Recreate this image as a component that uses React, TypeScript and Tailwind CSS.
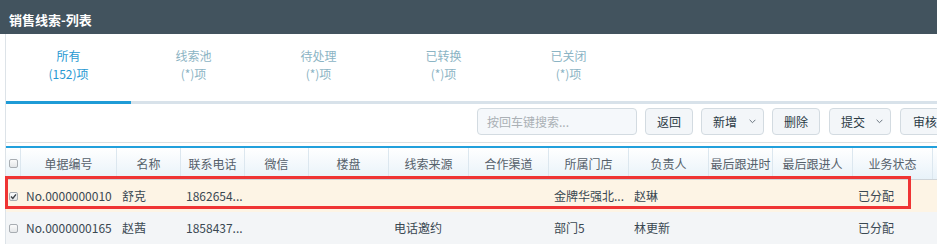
import React from "react";

const cols = [15, 96, 64, 64, 64, 80, 80, 80, 80, 80, 64, 80, 80, 80];
const headers = ["", "单据编号", "名称", "联系电话", "微信", "楼盘", "线索来源", "合作渠道", "所属门店", "负责人", "最后跟进时", "最后跟进人", "业务状态", ""];

const rows: { checked: boolean; bg: string; cells: string[] }[] = [
  {
    checked: true,
    bg: "bg-[#fdf4e5]",
    cells: ["No.0000000010", "舒克", "1862654...", "", "", "", "", "金牌华强北...", "赵琳", "", "", "已分配", ""],
  },
  {
    checked: false,
    bg: "bg-[#f3f5f7]",
    cells: ["No.0000000165", "赵茜", "1858437...", "", "", "电话邀约", "", "部门5", "林更新", "", "", "已分配", ""],
  },
];

function Checkbox({ checked }: { checked?: boolean }) {
  return (
    <div className="w-[9px] h-[9px] rounded-[2px] border border-[#a8adb2] bg-linear-to-b from-[#fbfbfb] to-[#e4e6e8] flex items-center justify-center">
      {checked && (
        <svg width="7" height="7" viewBox="0 0 7 7">
          <path d="M1 3.6 L2.8 5.4 L6 1.4" fill="none" stroke="#3d4247" strokeWidth="1.4" />
        </svg>
      )}
    </div>
  );
}

function Chevron() {
  return (
    <svg width="7" height="5" viewBox="0 0 7 5" className="shrink-0">
      <path d="M0.6 0.8 L3.5 3.7 L6.4 0.8" fill="none" stroke="#6b7680" strokeWidth="1" />
    </svg>
  );
}

const tabs = [
  { label: "所有", count: "(152)项", active: true },
  { label: "线索池", count: "(*)项" },
  { label: "待处理", count: "(*)项" },
  { label: "已转换", count: "(*)项" },
  { label: "已关闭", count: "(*)项" },
];

export default function App() {
  return (
    <div
      className="w-[937px] h-[250px] overflow-hidden bg-white"
      style={{ fontFamily: '"Noto Sans CJK SC", "Noto Sans", sans-serif' }}
    >
      <div className="h-[34px] bg-[#42535e] pl-[9px] pt-[6px]">
        <span className="text-[13px] leading-[18px] font-bold text-white">销售线索-列表</span>
      </div>
      <div className="ml-[5px] border-l border-[#dde3e8]">
        <div className="flex">
          {tabs.map((t) => (
            <div
              key={t.label}
              className={`w-[125px] h-[70px] pt-[13px] text-center text-[12px] leading-[18px] border-b-[3px] ${
                t.active ? "border-[#1f9bd6] text-[#2798d2]" : "border-[#d8e2ea] text-[#8bb4c4]"
              }`}
            >
              <div>{t.label}</div>
              <div>{t.count}</div>
            </div>
          ))}
          <div className="flex-1 h-[70px] border-b-[3px] border-[#d8e2ea]" />
        </div>
        <div className="h-[39px] border-b border-[#dcdfe2] flex items-start pt-[4px] pl-[471px] gap-[8px] text-[12px]">
          <div className="w-[160px] h-[27px] shrink-0 rounded-[4px] border border-[#d3dbe1] bg-[#f5f8fb] pl-[9px] flex items-center text-[#aab0b5]">
            按回车键搜索...
          </div>
          <div className="w-[48px] h-[27px] shrink-0 rounded-[4px] border border-[#d3dbe1] bg-[#f3f6f9] flex items-center justify-center text-[#2b3a45]">
            返回
          </div>
          <div className="w-[63px] h-[27px] shrink-0 rounded-[4px] border border-[#d3dbe1] bg-[#f3f6f9] flex items-center pl-[11px] gap-[12px] text-[#2b3a45]">
            <span>新增</span>
            <Chevron />
          </div>
          <div className="w-[48px] h-[27px] shrink-0 rounded-[4px] border border-[#d3dbe1] bg-[#f3f6f9] flex items-center justify-center text-[#2b3a45]">
            删除
          </div>
          <div className="ml-[1px] w-[62px] h-[27px] shrink-0 rounded-[4px] border border-[#d3dbe1] bg-[#f3f6f9] flex items-center pl-[11px] gap-[11px] text-[#2b3a45]">
            <span>提交</span>
            <Chevron />
          </div>
          <div className="ml-[1px] w-[62px] h-[27px] shrink-0 rounded-[4px] border border-[#d3dbe1] bg-[#f3f6f9] flex items-center pl-[12px] text-[#2b3a45]">
            审核
          </div>
        </div>
        <div className="relative mt-[3px] border-t-2 border-[#22a0dc]">
          <div className="flex h-[32px] border-b border-[#cfd4d8] bg-linear-to-b from-white to-[#e8f2f9] text-[12px] text-[#55606a]">
            {cols.map((w, i) => (
              <div
                key={i}
                style={{ width: w }}
                className="shrink-0 h-full border-r border-[#dce7ef] flex items-center justify-center whitespace-nowrap overflow-hidden"
              >
                {i === 0 ? <Checkbox /> : headers[i]}
              </div>
            ))}
          </div>
          {rows.map((r, ri) => (
            <div key={ri} className={`flex h-[32px] ${r.bg} text-[12px] text-[#3a4852]`}>
              {cols.map((w, i) => (
                <div
                  key={i}
                  style={{ width: w }}
                  className={`shrink-0 h-full flex items-center whitespace-nowrap overflow-hidden ${
                    i === 0 ? "justify-center" : "pl-[5px]"
                  }`}
                >
                  {i === 0 ? <Checkbox checked={r.checked} /> : r.cells[i - 1]}
                </div>
              ))}
            </div>
          ))}
          <div className="absolute left-[-1px] top-[28px] w-[906px] h-[33px] border-[3px] border-[#ef3434] pointer-events-none" />
        </div>
      </div>
    </div>
  );
}
